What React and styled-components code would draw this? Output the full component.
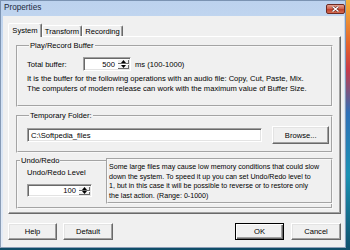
import React from 'react';
import styled, { createGlobalStyle, css } from 'styled-components';

const FONT = `"Liberation Sans", Arial, sans-serif`;

const GlobalStyle = createGlobalStyle`
  html, body {
    margin: 0;
    padding: 0;
  }
  body {
    font-family: ${FONT};
    font-size: 7.6px;
    color: #000;
    background: #0f4d68;
  }
`;

const Desktop = styled.div`
  width: 350px;
  height: 250px;
  display: flex;
  align-items: flex-start;
  background:
    linear-gradient(180deg, #f2b33a 0%, #e4622c 18%, #c83a4a 28%, #2f70b8 45%, #1b92b4 70%, #10506c 100%) right top / 4px 100% no-repeat,
    #0f4d68;
  overflow: hidden;
`;

const Window = styled.div`
  width: 346px;
  height: 248px;
  box-sizing: border-box;
  display: flex;
  flex-direction: column;
  background: linear-gradient(180deg, #bcd2ee 0%, #d2e1f4 35%, #e4ecf7 100%);
  box-shadow: inset 0 0 0 1px rgba(70, 95, 130, 0.55);
`;

const TitleBar = styled.div`
  height: 16px;
  flex: none;
  display: flex;
  align-items: center;
  padding: 0 1px 0 4px;
  font-size: 8.2px;
  color: #1b2a40;
`;

const Title = styled.span`
  flex: 1;
  line-height: 16px;
`;

const CloseButton = styled.div`
  width: 19px;
  height: 10px;
  margin-top: 1px;
  box-sizing: border-box;
  display: flex;
  align-items: center;
  justify-content: center;
  border: 1px solid #6d2a22;
  border-radius: 2px;
  background: linear-gradient(180deg, #e3a08f 0%, #d0654f 45%, #c0412c 55%, #d36a4f 100%);
`;

const Client = styled.div`
  flex: 1;
  margin: 0 2px 1px 3px;
  background: #f0f0f0;
  padding: 7px 3px 0 5px;
  display: flex;
  flex-direction: column;
`;

const TabStrip = styled.div`
  display: flex;
  align-items: flex-end;
  height: 13px;
  position: relative;
  z-index: 1;
`;

const Tab = styled.div`
  width: ${p => p.$w}px;
  height: ${p => (p.$active ? 14 : 11)}px;
  box-sizing: border-box;
  display: flex;
  align-items: center;
  justify-content: center;
  white-space: nowrap;
  background: #f0f0f0;
  border-top: 1px solid #fff;
  border-left: 1px solid #fff;
  border-right: 1px solid #696969;
  box-shadow: inset -1px 0 #a0a0a0;
  border-radius: 2px 2px 0 0;
  padding-top: ${p => (p.$active ? 0 : 1)}px;
  margin-bottom: ${p => (p.$active ? -1 : 0)}px;
`;

const Panel = styled.div`
  height: 178px;
  box-sizing: border-box;
  border-top: 1px solid #fff;
  border-left: 1px solid #fff;
  border-right: 1px solid #696969;
  border-bottom: 1px solid #696969;
  box-shadow: inset -1px -1px #a0a0a0;
  padding: 4px 7px 0 7px;
  display: flex;
  flex-direction: column;
`;

const Group = styled.fieldset`
  margin: ${p => p.$mt || 0}px 0 0 0;
  height: ${p => p.$h}px;
  box-sizing: border-box;
  border: 2px groove #f8f8f8;
  padding: ${p => p.$pad};
  min-width: 0;
`;

const Legend = styled.legend`
  padding: 0 1px;
  margin-left: 2px;
  line-height: 10px;
  font-size: 7.6px;
`;

const Row = styled.div`
  display: flex;
  align-items: ${p => p.$align || 'center'};
  gap: ${p => p.$gap || 0}px;
  height: ${p => p.$fill ? '100%' : 'auto'};
`;

const Label = styled.span`
  width: ${p => p.$w}px;
  flex: none;
`;

const Para = styled.div`
  line-height: ${p => p.$lh || 10}px;
  margin-top: ${p => p.$mt || 0}px;
  white-space: nowrap;
`;

const sunken = css`
  box-sizing: border-box;
  background: #fff;
  border: 1px solid;
  border-color: #a0a0a0 #fff #fff #a0a0a0;
  box-shadow: inset 1px 1px #696969, inset -1px -1px #e3e3e3;
`;

const SpinBox = styled.div`
  ${sunken};
  width: ${p => p.$w}px;
  height: ${p => p.$h}px;
  margin-top: ${p => p.$mt || 0}px;
  display: flex;
  padding: 1px;
`;

const SpinValue = styled.div`
  flex: 1;
  padding-right: 2px;
  display: flex;
  align-items: center;
  justify-content: flex-end;
`;

const SpinButtons = styled.div`
  width: 12px;
  display: flex;
  flex-direction: column;
`;

const SpinHalf = styled.div`
  flex: 1;
  display: flex;
  align-items: center;
  justify-content: center;
  background: #f0f0f0;
  box-shadow: inset 1px 1px #fff, inset -1px -1px #696969;
`;

const TextInput = styled.div`
  ${sunken};
  width: ${p => p.$w}px;
  height: 14px;
  padding: 0 3px;
  display: flex;
  align-items: center;
`;

const Button = styled.div`
  width: ${p => p.$w}px;
  height: ${p => p.$h || 17}px;
  box-sizing: border-box;
  display: flex;
  align-items: center;
  justify-content: center;
  background: #f0f0f0;
  border: 1px solid;
  ${p =>
    p.$default
      ? css`
          border-color: #000;
          box-shadow: inset 1px 1px #fff, inset -1px -1px #696969, inset -2px -2px #a0a0a0;
        `
      : css`
          border-color: #fff #696969 #696969 #fff;
          box-shadow: inset -1px -1px #a0a0a0, inset 1px 1px #e3e3e3;
        `}
`;

const UndoColumn = styled.div`
  width: 79px;
  flex: none;
  padding: 2px 0 0 9px;
`;

const NoteBox = styled.div`
  flex: 1;
  position: relative;
  background: #f0f0f0;
  border: 2px groove #f8f8f8;
  margin: -8px -2px -2px 0;
  padding: 3px 0 0 1px;
  font-size: 7.1px;
`;

const Footer = styled.div`
  display: flex;
  justify-content: space-between;
  margin-top: 9px;
`;

const ButtonGroup = styled.div`
  display: flex;
  gap: ${p => p.$gap}px;
`;

const Arrow = ({ down }) => (
  <svg width="5" height="3" viewBox="0 0 5 3">
    <polygon points={down ? '0,0 5,0 2.5,3' : '0,3 5,3 2.5,0'} fill="#000" />
  </svg>
);

const Spinner = ({ value, w, h, mt }) => (
  <SpinBox $w={w} $h={h} $mt={mt}>
    <SpinValue>{value}</SpinValue>
    <SpinButtons>
      <SpinHalf><Arrow /></SpinHalf>
      <SpinHalf><Arrow down /></SpinHalf>
    </SpinButtons>
  </SpinBox>
);

export default function App() {
  return (
    <Desktop>
      <GlobalStyle />
      <Window>
        <TitleBar>
          <Title>Properties</Title>
          <CloseButton>
            <svg width="9" height="6" viewBox="0 0 9 6">
              <path d="M1.5 0.5 L7.5 5.5 M7.5 0.5 L1.5 5.5" stroke="#5a1d16" strokeWidth="2.4" />
              <path d="M1.5 0.5 L7.5 5.5 M7.5 0.5 L1.5 5.5" stroke="#fff" strokeWidth="1.4" />
            </svg>
          </CloseButton>
        </TitleBar>
        <Client>
          <TabStrip>
            <Tab $active $w={34}>System</Tab>
            <Tab $w={40}>Transform</Tab>
            <Tab $w={41}>Recording</Tab>
          </TabStrip>
          <Panel>
            <Group $h={66} $pad="6px 0 0 9px">
              <Legend>Play/Record Buffer</Legend>
              <Row $gap={4}>
                <Label $w={52}>Total buffer:</Label>
                <Spinner value="500" w={48} h={14} />
                <span>ms (100-1000)</span>
              </Row>
              <Para $mt={3}>It is the buffer for the following operations with an audio file: Copy, Cut, Paste, Mix.</Para>
              <Para>The computers of modern release can work with the maximum value of Buffer Size.</Para>
            </Group>
            <Group $h={42} $mt={4} $pad="5px 2px 0 9px">
              <Legend>Temporary Folder:</Legend>
              <Row $gap={10}>
                <TextInput $w={237}>C:\Softpedia_files</TextInput>
                <Button $w={57} $h={18}>Browse...</Button>
              </Row>
            </Group>
            <Group $h={53} $mt={3} $pad="0">
              <Legend>Undo/Redo</Legend>
              <Row $align="stretch" $fill>
                <UndoColumn>
                  <Para>Undo/Redo Level</Para>
                  <Spinner value="100" w={65} h={13} mt={6} />
                </UndoColumn>
                <NoteBox>
                  <Para $lh={9.7}>Some large files may cause low memory conditions that could slow</Para>
                  <Para $lh={9.7}>down the system. To speed it up you can set Undo/Redo level to</Para>
                  <Para $lh={9.7}>1, but in this case it will be possible to reverse or to restore only</Para>
                  <Para $lh={9.7}>the last action. (Range: 0-1000)</Para>
                </NoteBox>
              </Row>
            </Group>
          </Panel>
          <Footer>
            <ButtonGroup $gap={6}>
              <Button $w={49}>Help</Button>
              <Button $w={50}>Default</Button>
            </ButtonGroup>
            <ButtonGroup $gap={7}>
              <Button $w={49} $default>OK</Button>
              <Button $w={50}>Cancel</Button>
            </ButtonGroup>
          </Footer>
        </Client>
      </Window>
    </Desktop>
  );
}
